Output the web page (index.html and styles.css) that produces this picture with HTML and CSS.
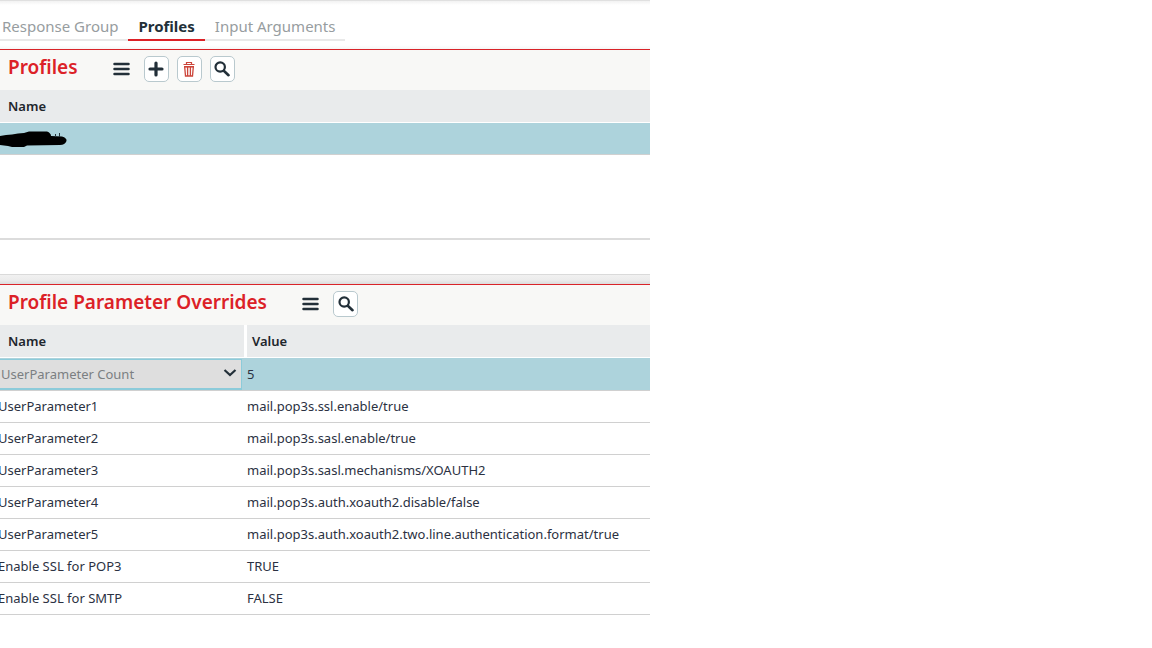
FILE: index.html
```html
<!DOCTYPE html>
<html lang="en">
<head>
    <meta charset="UTF-8">
    <meta name="viewport" content="width=device-width, initial-scale=1.0">
    <title>Profiles</title>
    <link rel="stylesheet" href="styles.css">
</head>
<body>
    <main class="page">
        <nav class="tabs">
            <a href="#response-group">Response Group</a>
            <a href="#profiles" class="active">Profiles</a>
            <a href="#input-arguments">Input Arguments</a>
        </nav>

        <section class="panel" id="profiles">
            <div class="toolbar">
                <h2>Profiles</h2>
                <button type="button" class="menu" aria-label="Menu">
                    <svg width="17" height="14" viewBox="0 0 17 14"><path d="M1.500 2h14M1.500 7h14M1.500 12h14" stroke="#222f38" stroke-width="2.500" stroke-linecap="round"/></svg>
                </button>
                <button type="button" class="tool" aria-label="New">
                    <svg width="16" height="16" viewBox="0 0 16 16"><path d="M8 2v12M2 8h12" stroke="#222f38" stroke-width="3.2" stroke-linecap="round"/></svg>
                </button>
                <button type="button" class="tool" aria-label="Delete">
                    <svg width="16" height="16" viewBox="0 0 16 16" fill="none" stroke="#cc453a"><path d="M2.5 3.5h11M5.5 3.5v-2h5v2" stroke-width="1.2"/><path d="M3 5.8h10" stroke-width="1.6"/><path d="M3.7 6l.8 9h7l.8-9M6.6 6v8.500M9.400 6v8.500" stroke-width="1.3"/></svg>
                </button>
                <button type="button" class="tool" aria-label="Search">
                    <svg width="16" height="16" viewBox="0 0 16 16" fill="none" stroke="#222f38"><circle cx="6.200" cy="6" r="4.700" stroke-width="2.200"/><path d="M9.800 9.800l4.700 4.400" stroke-width="2.600" stroke-linecap="round"/></svg>
                </button>
            </div>
            <div class="profile-list">
                <table>
                    <thead>
                        <tr><th>Name</th></tr>
                    </thead>
                    <tbody>
                        <tr class="selected">
                            <td>
                                <svg class="redacted" width="68" height="18" viewBox="0 0 68 18" role="img" aria-label="Hidden name"><path d="M0 6L6 5L12 4.500L18 3.500L24 3L29 1.500L47 1.500Q51 3 51 6L62 6.500Q67 8 66.500 11Q65 15 60 15L27 15.500L24 17L12 17L8 16L0 15Z"/><path d="M55.500 4v3M59.500 3v4" stroke="#26363d"/></svg>
                            </td>
                        </tr>
                    </tbody>
                </table>
            </div>
            <div class="panel-foot"></div>
        </section>
        <div class="splitter"></div>

        <section class="panel" id="overrides">
            <div class="toolbar">
                <h2>Profile Parameter Overrides</h2>
                <button type="button" class="menu" aria-label="Menu">
                    <svg width="17" height="14" viewBox="0 0 17 14"><path d="M1.500 2h14M1.500 7h14M1.500 12h14" stroke="#222f38" stroke-width="2.500" stroke-linecap="round"/></svg>
                </button>
                <button type="button" class="tool" aria-label="Search">
                    <svg width="16" height="16" viewBox="0 0 16 16" fill="none" stroke="#222f38"><circle cx="6.200" cy="6" r="4.700" stroke-width="2.200"/><path d="M9.800 9.800l4.700 4.400" stroke-width="2.600" stroke-linecap="round"/></svg>
                </button>
            </div>
            <table class="params">
                <thead>
                    <tr><th>Name</th><th>Value</th></tr>
                </thead>
                <tbody>
                    <tr class="selected">
                        <td>
                            <div class="picker">
                                <select aria-label="Parameter name">
                                    <option>UserParameter Count</option>
                                </select>
                                <svg width="14" height="10" viewBox="0 0 14 10"><path d="M1.500 2L7 7L12.500 2" fill="none" stroke="#222f38" stroke-width="2.200"/></svg>
                            </div>
                        </td>
                        <td>5</td>
                    </tr>
                    <tr><td>UserParameter1</td><td>mail.pop3s.ssl.enable/true</td></tr>
                    <tr><td>UserParameter2</td><td>mail.pop3s.sasl.enable/true</td></tr>
                    <tr><td>UserParameter3</td><td>mail.pop3s.sasl.mechanisms/XOAUTH2</td></tr>
                    <tr><td>UserParameter4</td><td>mail.pop3s.auth.xoauth2.disable/false</td></tr>
                    <tr><td>UserParameter5</td><td>mail.pop3s.auth.xoauth2.two.line.authentication.format/true</td></tr>
                    <tr><td>Enable SSL for POP3</td><td>TRUE</td></tr>
                    <tr><td>Enable SSL for SMTP</td><td>FALSE</td></tr>
                </tbody>
            </table>
        </section>
    </main>
</body>
</html>
```
FILE: styles.css
```css
* {
    box-sizing: border-box;
}
body {
    margin: 0;
    background-color: #fff;
    color: #2b3142;
    font-family: "Noto Sans", "Open Sans", sans-serif;
    font-size: 13px;
}
.page {
    max-width: 650px;
    overflow: hidden;
}
.tabs {
    display: flex;
    height: 49px;
    padding-top: 12px;
    border-top: 1px solid #e0e0e0;
    background: linear-gradient(#f2f2f2, #fff 4px, #fff 44px, #f6f6f6);
}
.tabs a {
    height: 28px;
    padding: 0 10px;
    border-bottom: 2px solid #e9e9e9;
    color: #979da0;
    font-size: 15px;
    line-height: 26px;
    text-decoration: none;
    white-space: nowrap;
}
.tabs a:first-child {
    padding-left: 2px;
}
.tabs a.active {
    border-bottom-color: #dc2127;
    color: #222f38;
    font-weight: bold;
}
.panel {
    border-top: 1px solid #d92328;
}
.toolbar {
    display: flex;
    align-items: center;
    height: 40px;
    padding: 0 8px 2px;
    background-color: #f8f8f6;
}
.toolbar h2 {
    margin: 0 35px 4px 0;
    color: #dc2127;
    font-size: 19px;
    font-weight: 600;
    line-height: 28px;
    white-space: nowrap;
}
button {
    display: flex;
    align-items: center;
    justify-content: center;
    padding: 0;
    cursor: pointer;
}
.menu {
    width: 17px;
    height: 26px;
    margin-right: 14px;
    border: none;
    background: none;
}
.tool {
    width: 25px;
    height: 26px;
    margin-right: 8px;
    border: 1px solid #b9c9ce;
    border-radius: 5px;
    background-color: #fff;
}
table {
    width: 100%;
    border-collapse: separate;
    border-spacing: 0;
    table-layout: fixed;
}
th {
    height: 33px;
    padding: 0 8px;
    border-bottom: 1px solid #fff;
    background-color: #e9ebec;
    color: #1e262c;
    font-weight: 600;
    line-height: 20px;
    text-align: left;
}
td {
    height: 32px;
    padding: 0 0 2px;
    border-bottom: 1px solid #d0d0d0;
    line-height: 20px;
    white-space: nowrap;
}
.selected td {
    padding: 0;
    background-color: #add3dc;
}
.profile-list {
    height: 150px;
    border-bottom: 2px solid #dcdcdc;
}
.redacted {
    display: block;
}
.panel-foot {
    height: 35px;
    border-bottom: 1px solid #dadada;
}
.splitter {
    height: 9px;
    background: linear-gradient(#f1f1f1, #ececec 5px, #dcdcdc);
}
.params th:first-child {
    width: 247px;
    border-right: 3px solid #fff;
}
.params th:last-child {
    padding-left: 5px;
}
.params td:first-child {
    text-indent: -2px;
}
.params .selected td {
    height: 33px;
}
.picker {
    position: relative;
    width: 242px;
}
.picker select {
    display: block;
    width: 100%;
    height: 31px;
    padding: 0 24px 0 1px;
    border: 1px solid #8ccbda;
    border-width: 1px 1px 2px 0;
    border-radius: 0;
    background-color: #dedede;
    color: #7b7f82;
    font: inherit;
    appearance: none;
}
.picker svg {
    position: absolute;
    top: 9px;
    right: 5px;
    pointer-events: none;
}
```
